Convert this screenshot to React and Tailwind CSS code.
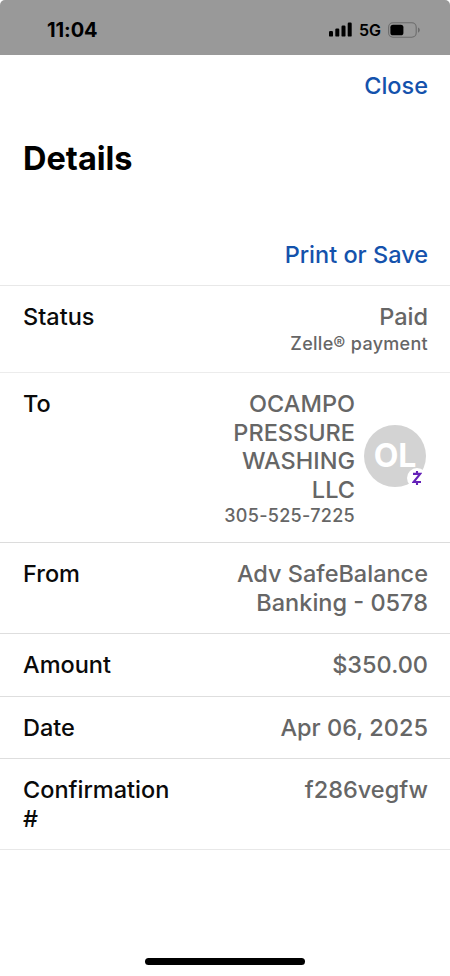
import clsx from 'clsx'

const StatusBar = () => (
  <div className="bg-white">
    <div className="flex h-[55px] items-start justify-between rounded-t-[5px] bg-[#999999] pt-[18px] pr-[30px] pl-[47px]">
      <span className="text-[20px] leading-6 font-bold tracking-[-0.1px] text-black">11:04</span>
      <div className="flex h-6 items-center">
        <svg width="24" height="16" viewBox="0 0 24 16" fill="#000">
          <rect x="0" y="9" width="4" height="5.6" rx="1.2" />
          <rect x="6.3" y="6.6" width="4" height="8" rx="1.2" />
          <rect x="12.5" y="3.6" width="4" height="11" rx="1.2" />
          <rect x="18.7" y="0.6" width="4" height="14" rx="1.2" />
        </svg>
        <span className="ml-[6px] w-[23px] text-[16px] leading-6 font-semibold whitespace-nowrap">5G</span>
        <svg className="ml-[6px]" width="32" height="16" viewBox="0 0 32 16" fill="none">
          <rect x="0.6" y="0.8" width="27.6" height="14.4" rx="4.4" stroke="#6c6c6c" strokeWidth="1.1" />
          <rect x="2.4" y="2.7" width="13" height="10.6" rx="2.6" fill="#000" />
          <path d="M30 5.4c1.2.5 1.8 1.5 1.8 2.6s-.6 2.1-1.8 2.6z" fill="#6c6c6c" />
        </svg>
      </div>
    </div>
  </div>
)

const Avatar = () => (
  <div className="relative mt-[35px] mr-[2px] ml-[9px] flex h-[62px] w-[62px] shrink-0 items-center justify-center rounded-full bg-[#d3d3d3]">
    <span className="text-[32px] leading-none font-bold text-white">OL</span>
    {/* Zelle badge */}
    <div className="absolute -right-[1px] -bottom-[1px] flex h-5 w-5 items-center justify-center rounded-full bg-white">
      <svg width="10" height="16" viewBox="0 0 10 16" fill="none" stroke="#6522b8" strokeWidth="2.1">
        <path d="M1 3.9h7.2L1.6 12H9" />
        <path d="M5 0.9v3M5 12v3" />
      </svg>
    </div>
  </div>
)

const Row = ({ label, lines, note, avatar, className }) => (
  <div className={clsx('flex justify-between border-b pt-[17px] pr-[22px] pl-[23px]', className)}>
    <div className="w-[150px] text-[23.5px] leading-[28.5px] font-medium text-[#0a0a0a]">{label}</div>
    <div className="flex">
      <div className="text-right font-medium text-[#666666]">
        {lines.map((line) => (
          <p key={line} className="text-[23.5px] leading-[28.5px] whitespace-nowrap">{line}</p>
        ))}
        {note && <p className="text-[18px] leading-[23px] tracking-[0.3px] whitespace-nowrap">{note}</p>}
      </div>
      {avatar && <Avatar />}
    </div>
  </div>
)

const rows = [
  { label: 'Status', lines: ['Paid'], note: 'Zelle® payment', className: 'h-[87px] border-[#ececec]' },
  {
    label: 'To',
    lines: ['OCAMPO', 'PRESSURE', 'WASHING', 'LLC'],
    note: '305-525-7225',
    avatar: true,
    className: 'h-[170px] border-[#dcdcdc]',
  },
  { label: 'From', lines: ['Adv SafeBalance', 'Banking - 0578'], className: 'h-[91px] border-[#dedede]' },
  { label: 'Amount', lines: ['$350.00'], className: 'h-[63px] border-[#dedede]' },
  { label: 'Date', lines: ['Apr 06, 2025'], className: 'h-[62px] border-[#dedede]' },
  { label: 'Confirmation #', lines: ['f286vegfw'], className: 'h-[91px] border-[#e8e8e8]' },
]

const App = () => {
  return (
    <div className="flex h-[976px] w-[450px] flex-col overflow-hidden bg-white font-['Inter',sans-serif]">
      <StatusBar />

      <div className="flex justify-end pt-[17px] pr-[22px]">
        <button className="text-[23.5px] leading-[28px] font-medium text-[#1452ac]">Close</button>
      </div>

      <h1 className="mt-[39px] pl-[23px] text-[32.5px] leading-10 font-bold text-black">Details</h1>

      <div className="flex h-[107px] items-end justify-end border-b border-[#e8e8e8] pr-[22px] pb-[16px]">
        <button className="text-[23.5px] leading-[28px] font-medium text-[#1452ac]">Print or Save</button>
      </div>

      {rows.map((row) => (
        <Row key={row.label} {...row} />
      ))}

      {/* Home indicator */}
      <div className="mt-auto flex justify-center pb-[11px]">
        <div className="h-[7px] w-40 rounded-full bg-black" />
      </div>
    </div>
  )
}

export default App
